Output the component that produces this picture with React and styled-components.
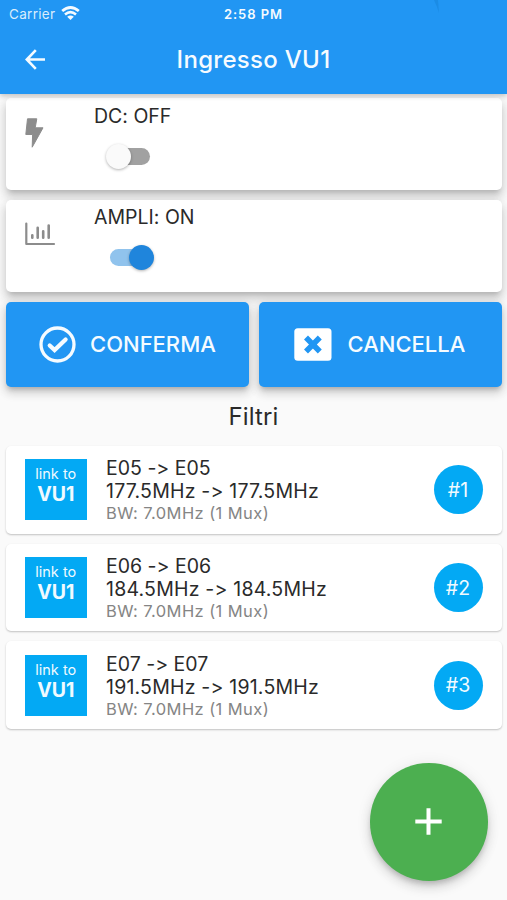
import styled, { createGlobalStyle } from "styled-components";

const GlobalStyle = createGlobalStyle`
  * {
    box-sizing: border-box;
  }
  body {
    margin: 0;
    background: #fafafa;
    font-family: Inter, Roboto, sans-serif;
    font-feature-settings: "calt" 0;
    color: #2a2a2a;
  }
`;
const Screen = styled.div`
  position: relative;
  height: 900px;
  overflow: hidden;
  background: #fafafa;
  white-space: nowrap;
`;
const AppBar = styled.header`
  position: relative;
  z-index: 1;
  height: 94px;
  background: #2196f3;
  color: #f5fbff;
  box-shadow: 0 2px 5px rgba(0, 0, 0, 0.22);
`;
const StatusBar = styled.div`
  height: 27px;
  padding: 0 9px;
  display: grid;
  grid-template-columns: 1fr auto 1fr;
  align-items: center;
`;
const Carrier = styled.div`
  display: flex;
  align-items: center;
  gap: 6px;
  font-size: 13.5px;
  letter-spacing: 0.3px;
  color: #d9edfc;
`;
const Clock = styled.div`
  font-size: 13px;
  font-weight: 600;
  letter-spacing: 0.95px;
`;
const Ribbon = styled.svg`
  position: absolute;
  left: 432px;
  top: 0;
`;
const TitleRow = styled.div`
  height: 65px;
  padding: 0 22px;
  display: grid;
  grid-template-columns: 26px 1fr 26px;
  align-items: center;
`;
const BackButton = styled.button`
  display: flex;
  padding: 0 0 0 3px;
  border: none;
  background: transparent;
  color: inherit;
`;
const Title = styled.h1`
  margin: 0;
  text-align: center;
  font-size: 24px;
  font-weight: 500;
  letter-spacing: 0.3px;
`;
const Settings = styled.section`
  height: 308px;
  padding: 4.4px 3px 0;
  overflow: hidden;
`;
const Panel = styled.div`
  height: 91.6px;
  margin: 0 2px 10px 3px;
  padding: 7.2px 19px;
  display: grid;
  grid-template-columns: 69px 1fr;
  border-radius: 5px;
  background: #fff;
  box-shadow: 0 5px 5px -3px rgba(0, 0, 0, 0.16),
    0 7px 10px 1px rgba(0, 0, 0, 0.11), 0 3px 12px 2px rgba(0, 0, 0, 0.08);
`;
const PanelIcon = styled.div`
  height: 54px;
  display: flex;
  align-items: center;
`;
const PanelText = styled.div`
  font-size: 19.5px;
  line-height: 20px;
`;
const Toggle = styled.div`
  width: 40px;
  height: 17px;
  margin: 22px 0 0 16px;
  display: flex;
  align-items: center;
  justify-content: ${({ $on }) => ($on ? "flex-end" : "flex-start")};
  border-radius: 9px;
  background: ${({ $on }) => ($on ? "#90c3ed" : "#a1a1a1")};
`;
const Knob = styled.div`
  flex: none;
  width: 25px;
  height: 25px;
  margin: 0 ${({ $on }) => ($on ? "-4px 0 0" : "0 0 -4px")};
  border-radius: 50%;
  background: ${({ $on }) => ($on ? "#1f85dc" : "#fafafa")};
  box-shadow: 0 1px 3px rgba(0, 0, 0, 0.3);
`;
const Actions = styled.div`
  margin: 0 2px 0 3px;
  display: grid;
  grid-template-columns: 1fr 1fr;
  gap: 10px;
`;
const ActionButton = styled.button`
  height: 85.5px;
  padding: 0 0 0 ${({ $left }) => $left}px;
  display: flex;
  align-items: center;
  gap: ${({ $gap }) => $gap}px;
  border: none;
  border-radius: 5px;
  background: #2196f3;
  color: #f5fbff;
  font-family: inherit;
  font-feature-settings: inherit;
  font-size: 22px;
  font-weight: 500;
  letter-spacing: 0;
  box-shadow: 0 4px 5px -2px rgba(0, 0, 0, 0.2),
    0 6px 10px 1px rgba(0, 0, 0, 0.11), 0 2px 12px 2px rgba(0, 0, 0, 0.08);
`;
const Heading = styled.h2`
  height: 44px;
  margin: 0;
  text-align: center;
  font-size: 24px;
  font-weight: 400;
  line-height: 29px;
  letter-spacing: 0.1px;
`;
const List = styled.div`
  padding: 0 5px 0 6px;
  display: grid;
  gap: 10px;
`;
const FilterCard = styled.div`
  height: 87.7px;
  padding: 0 19.5px 0 19px;
  display: grid;
  grid-template-columns: 61.5px 1fr 49px;
  column-gap: 19.5px;
  align-items: center;
  border-radius: 5px;
  background: #fff;
  box-shadow: 0 1px 2px rgba(0, 0, 0, 0.23);
`;
const LinkTile = styled.div`
  height: 61px;
  padding-top: 6px;
  background: #03a9f4;
  color: #f0faff;
  text-align: center;
  font-size: 14.5px;
  line-height: 18px;
`;
const LinkName = styled.div`
  font-size: 19.5px;
  font-weight: 700;
  line-height: 22px;
`;
const FilterText = styled.div`
  padding-top: 2px;
  font-size: 19.5px;
  line-height: 23px;
`;
const Frequency = styled.div`
  letter-spacing: 0.2px;
`;
const Bandwidth = styled.div`
  font-size: 16.5px;
  line-height: 21px;
  letter-spacing: 0.42px;
  color: #858585;
`;
const Badge = styled.div`
  height: 49px;
  display: flex;
  align-items: center;
  justify-content: center;
  border-radius: 50%;
  background: #03a9f4;
  color: #f0faff;
  font-size: 19.5px;
`;
const AddButton = styled.button`
  position: absolute;
  right: 19.5px;
  bottom: 19.5px;
  width: 117.5px;
  height: 117.5px;
  display: flex;
  align-items: center;
  justify-content: center;
  padding: 0;
  border: none;
  border-radius: 50%;
  background: #4caf50;
  color: #fff;
  box-shadow: 0 4px 5px -1px rgba(0, 0, 0, 0.16),
    0 7px 12px rgba(0, 0, 0, 0.12), 0 1px 16px rgba(0, 0, 0, 0.07);
`;

const filters = [
  { id: 1, channel: "E05", freq: "177.5MHz" },
  { id: 2, channel: "E06", freq: "184.5MHz" },
  { id: 3, channel: "E07", freq: "191.5MHz" },
];

const Wifi = () => (
  <svg width="19" height="15" viewBox="0 0 19 15" fill="none" stroke="#f5fbff">
    <path d="M1.2 5Q9.5-2 17.8 5" strokeWidth="2.8" />
    <path d="M4 8.4Q9.5 3.8 15 8.4" strokeWidth="2.6" />
    <path d="M6.2 10.7Q9.5 8.2 12.8 10.7L9.5 14Z" fill="#f5fbff" stroke="none" />
  </svg>
);

const BackArrow = () => (
  <svg width="21" height="21" viewBox="0 0 21 21" fill="none" stroke="currentColor" strokeWidth="2.6">
    <path d="M20 10.5H2.5M10.8 1.2L1.8 10.5L10.8 19.8" />
  </svg>
);

const Bolt = () => (
  <svg width="19" height="30" viewBox="0 0 19 30">
    <path
      d="M2.5.8H11.8L10.2 9.8H18L7.2 29.2L7.6 16.5H.8Z"
      fill="#8c8c8c"
      stroke="#8c8c8c"
      strokeWidth="1"
      strokeLinejoin="round"
    />
  </svg>
);

const Chart = () => (
  <svg width="31" height="24" viewBox="0 0 31 24" fill="none" stroke="#8c8c8c" strokeLinecap="round" strokeLinejoin="round">
    <path d="M1.3 1.5V22H29" strokeWidth="2.2" />
    <path d="M7.3 13.2V15.8M12.7 5.7V15.8M18.2 9.3V15.8M23.7 3.6V15.8" strokeWidth="2.6" />
  </svg>
);

const Confirm = () => (
  <svg width="37" height="37" viewBox="0 0 37 37" fill="none" stroke="currentColor">
    <circle cx="18.5" cy="18.5" r="16.5" strokeWidth="3.3" />
    <path
      d="M10.7 19.4L15.6 24.1L26.6 13.4"
      strokeWidth="4.2"
      strokeLinecap="round"
    />
  </svg>
);

const Cancel = () => (
  <svg width="38" height="33" viewBox="0 0 38 33">
    <rect x=".3" y=".3" width="37.2" height="32.4" rx="3.5" fill="#fff" />
    <path
      d="M12 9.6L25.8 23.4M25.8 9.6L12 23.4"
      stroke="#2196f3"
      strokeWidth="5.6"
    />
  </svg>
);

const Plus = () => (
  <svg width="27" height="27" viewBox="0 0 27 27" stroke="currentColor" strokeWidth="4">
    <path d="M.3 13.5H26.7M13.5.3V26.7" />
  </svg>
);

const Setting = ({ icon, label, on }) => (
  <Panel>
    <PanelIcon>{icon}</PanelIcon>
    <PanelText>
      {label}: {on ? "ON" : "OFF"}
      <Toggle $on={on} role="switch" aria-checked={on}>
        <Knob $on={on} />
      </Toggle>
    </PanelText>
  </Panel>
);

const App = () => {
  return (
    <Screen>
      <GlobalStyle />
      <AppBar>
        <StatusBar>
          <Carrier>
            Carrier <Wifi />
          </Carrier>
          <Clock>2:58 PM</Clock>
        </StatusBar>
        <Ribbon width="9" height="15" viewBox="0 0 9 15">
          <path d="M2 0H6L7 13Q5 6 2 0Z" fill="#1785dc" opacity="0.6" />
        </Ribbon>
        <TitleRow>
          <BackButton>
            <BackArrow />
          </BackButton>
          <Title>Ingresso VU1</Title>
        </TitleRow>
      </AppBar>
      <Settings>
        <Setting icon={<Bolt />} label="DC" on={false} />
        <Setting icon={<Chart />} label="AMPLI" on />
        <Actions>
          <ActionButton $left={33} $gap={14}>
            <Confirm />
            CONFERMA
          </ActionButton>
          <ActionButton $left={35} $gap={15.5}>
            <Cancel />
            CANCELLA
          </ActionButton>
        </Actions>
      </Settings>
      <Heading>Filtri</Heading>
      <List>
        {filters.map(({ id, channel, freq }) => (
          <FilterCard key={id}>
            <LinkTile>
              link to
              <LinkName>VU1</LinkName>
            </LinkTile>
            <FilterText>
              <div>{channel} -&gt; {channel}</div>
              <Frequency>{freq} -&gt; {freq}</Frequency>
              <Bandwidth>BW: 7.0MHz (1 Mux)</Bandwidth>
            </FilterText>
            <Badge>#{id}</Badge>
          </FilterCard>
        ))}
      </List>
      <AddButton>
        <Plus />
      </AddButton>
    </Screen>
  );
};

export default App;
